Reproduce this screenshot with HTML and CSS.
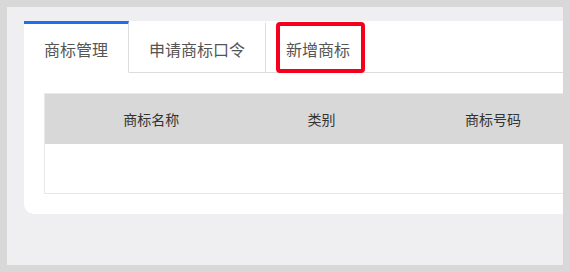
FILE: index.html
```html
<!DOCTYPE html>
<html lang="zh-CN">
<head>
<meta charset="UTF-8">
<meta name="viewport" content="width=device-width, initial-scale=1.0">
<title>商标管理</title>
<link rel="stylesheet" href="styles.css">
</head>
<body>

<div class="page">
  <div class="card">
    <div class="tabs">
      <div class="tab active">商标管理</div>
      <div class="tab">申请商标口令</div>
      <div class="tab tab-new">新增商标</div>
      <div class="tabs-fill"></div>
    </div>

    <table class="brand-table">
      <colgroup>
        <col class="col-name">
        <col class="col-type">
        <col class="col-no">
        <col class="col-rest">
      </colgroup>
      <thead>
        <tr>
          <th>商标名称</th>
          <th>类别</th>
          <th>商标号码</th>
          <th></th>
        </tr>
      </thead>
      <tbody>
        <tr class="empty-row">
          <td colspan="4"></td>
        </tr>
      </tbody>
    </table>
  </div>
</div>

</body>
</html>
```

FILE: styles.css
```css
html, body {
  margin: 0;
  height: 100%;
}
body {
  font-family: "Noto Sans CJK SC", "Noto Sans", Arial, sans-serif;
  background-color: #d8d8d8;
  padding: 7px;
  box-sizing: border-box;
}
.page {
  height: 258px;
  background-color: #efeff1;
  overflow: hidden;
  padding: 14px 0 0 17px;
  box-sizing: border-box;
}
.card {
  width: 640px;
  height: 193px;
  background-color: #fff;
  border-bottom-left-radius: 10px;
  box-sizing: border-box;
}
.tabs {
  display: flex;
}
.tab {
  position: relative;
  padding: 0 20px;
  height: 48px;
  line-height: 50px;
  font-size: 16px;
  color: #555;
  border-top: 3px solid transparent;
  border-right: 1px solid #dcdcdc;
  border-bottom: 1px solid #dcdcdc;
}
.tab.active {
  border-top-color: #1e6ff0;
  border-bottom-color: #fff;
}
.tab-new {
  border-right: none;
}
/* highlight drawn over the new-brand tab */
.tab-new::after {
  content: "";
  position: absolute;
  left: 10px;
  right: 5px;
  top: -2px;
  bottom: -1px;
  border: 4px solid #f2001e;
  border-radius: 4px;
}
.tabs-fill {
  flex: 1;
  border-bottom: 1px solid #dcdcdc;
}
.brand-table {
  margin: 20px 0 0 20px;
  width: 620px;
  table-layout: fixed;
  border-collapse: collapse;
  border: 1px solid #e8e8e8;
}
.col-name { width: 213px; }
.col-type { width: 128px; }
.col-no { width: 215px; }
.brand-table th {
  height: 50px;
  padding: 0;
  background-color: #d8d8d8;
  font-size: 14px;
  font-weight: normal;
  color: #333;
  text-align: center;
}
.empty-row td {
  height: 49px;
  padding: 0;
}
```
